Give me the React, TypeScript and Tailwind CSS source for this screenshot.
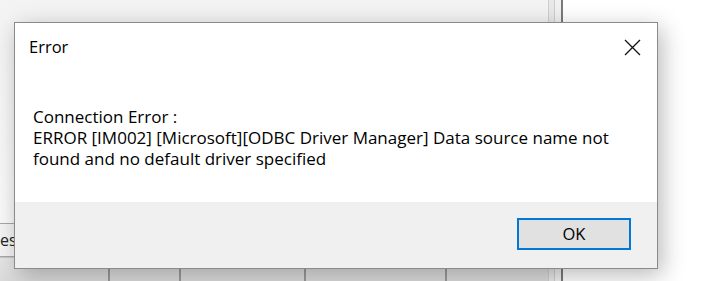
export default function App() {
  return (
    <div
      className="relative w-[703px] h-[281px] overflow-hidden bg-[#f6f6f6] text-black"
      style={{ fontFamily: '"Segoe UI", "Open Sans", "Noto Sans", sans-serif' }}
    >
      {/* Backdrop: the app window behind the dialog */}
      <div className="flex h-full">
        <div className="flex flex-col w-[548px] h-full bg-gradient-to-b from-[#f3f3f3] to-[#fbfbfb]">
          <div className="h-[223px]" />
          <div className="h-[34px] border-t border-b border-[#a8a8a8] bg-[#f4f4f4] flex items-center">
            <span className="text-[16px] leading-none text-[#222]">es</span>
          </div>
          <div className="flex-1 flex bg-gradient-to-b from-[#e6e6e6] to-[#dadada] border-t border-[#c8c8c8]">
            <div className="w-[110px] border-r-2 border-[#9a9a9a]" />
            <div className="w-[71px] border-r-2 border-[#9a9a9a]" />
            <div className="w-[125px] border-r-2 border-[#9a9a9a]" />
            <div className="w-[141px] border-r-2 border-[#9a9a9a]" />
            <div className="flex-1" />
          </div>
        </div>
        <div className="w-[7px] h-full bg-[#e9e9e9] border-l border-r border-[#cfcfcf]" />
        <div className="w-[8px] h-full bg-[#f1f1f1] border-r-2 border-[#7a7a7a]" />
        <div className="flex-1 h-full bg-white" />
      </div>

      {/* Error dialog */}
      <div className="absolute left-[14px] top-[22px] w-[644px] h-[247px] flex flex-col bg-white border border-[#8a8a8a] shadow-[4px_6px_22px_rgba(0,0,0,0.28)]">
        <div className="flex items-center justify-between h-[47px] pl-[14px] pr-[16px]">
          <span className="text-[16.5px] text-black mt-[1px]">Error</span>
          <svg width="17" height="17" viewBox="0 0 17 17" className="mt-[1px]">
            <path d="M1 1 L16 16 M16 1 L1 16" stroke="#111" strokeWidth="1.3" fill="none" />
          </svg>
        </div>
        <div className="flex-1 bg-white pl-[18px] pt-[36px]">
          <p className="text-[17px] leading-[21px] text-black w-[592px]">
            Connection Error :<br />
            ERROR [IM002] [Microsoft][ODBC Driver Manager] Data source name not found and no default driver specified
          </p>
        </div>
        <div className="h-[66px] bg-[#f0f0f0] flex items-start justify-end pr-[26px] pt-[16px]">
          <button className="w-[114px] h-[32px] bg-[#e1e1e1] border-2 border-[#0078d7] flex items-center justify-center text-[16.5px] text-black">
            OK
          </button>
        </div>
      </div>
    </div>
  );
}
